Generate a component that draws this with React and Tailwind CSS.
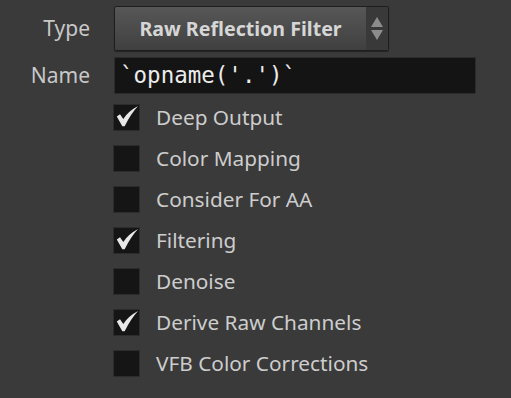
import React from 'react';

const Check = () => (
  <svg viewBox="0 0 27 27" className="w-full h-full">
    <path d="M3 12.5 L6.5 10 L10 15 Q15.5 6.5 26 1 Q18 9.5 11.5 23 L9 23 Z" fill="#e8e8e8" />
  </svg>
);

const Toggle = ({ label, checked }) => (
  <div className="flex items-center h-[27px]">
    <div className="w-[27px] h-[27px] bg-[#151515] border border-[#2c2c2c] shrink-0">
      {checked && <Check />}
    </div>
    <span className="ml-[16px] text-[20.8px] text-[#cdcdcd] leading-none">{label}</span>
  </div>
);

const items = [
  ['Deep Output', true],
  ['Color Mapping', false],
  ['Consider For AA', false],
  ['Filtering', true],
  ['Denoise', false],
  ['Derive Raw Channels', true],
  ['VFB Color Corrections', false],
];

export default function App() {
  return (
    <div
      className="w-[511px] h-[398px] bg-[#3a3a3a] overflow-hidden pt-[6px]"
      style={{ fontFamily: '"Noto Sans", "Open Sans", sans-serif' }}
    >
      {/* Type */}
      <div className="flex items-center h-[45px]">
        <div className="w-[90px] text-right text-[21px] text-[#c8c8c8]">Type</div>
        <div className="ml-[24px] w-[275px] h-[45px] flex rounded-[2px] border border-[#1e1e1e] bg-gradient-to-b from-[#575757] to-[#404040] shadow-[0_1px_1px_rgba(0,0,0,0.4)]">
          <div className="flex-1 flex items-center justify-center text-[19.6px] font-bold text-[#d6d6d6]">
            Raw Reflection Filter
          </div>
          <div className="w-[22px] bg-[#393939] flex flex-col items-center justify-center gap-[3px]">
            <svg width="12" height="10" viewBox="0 0 12 10"><path d="M6 0 L12 10 L0 10 Z" fill="#8c8c8c" /></svg>
            <svg width="12" height="10" viewBox="0 0 12 10"><path d="M0 0 L12 0 L6 10 Z" fill="#8c8c8c" /></svg>
          </div>
        </div>
      </div>

      {/* Name */}
      <div className="flex items-center h-[37px] mt-[6px]">
        <div className="w-[90px] text-right text-[21px] text-[#c8c8c8]">Name</div>
        <div className="ml-[24px] w-[362px] h-[37px] bg-[#141414] border border-[#2c2c2c] flex items-center pl-[5px]">
          <span
            className="text-[22.5px] text-[#ececec] leading-none"
            style={{ fontFamily: '"DejaVu Sans Mono", monospace' }}
          >
            `opname('.')`
          </span>
        </div>
      </div>

      <div className="ml-[113px] mt-[10px] flex flex-col gap-[14px]">
        {items.map(([label, checked]) => (
          <Toggle key={label} label={label} checked={checked} />
        ))}
      </div>
    </div>
  );
}
